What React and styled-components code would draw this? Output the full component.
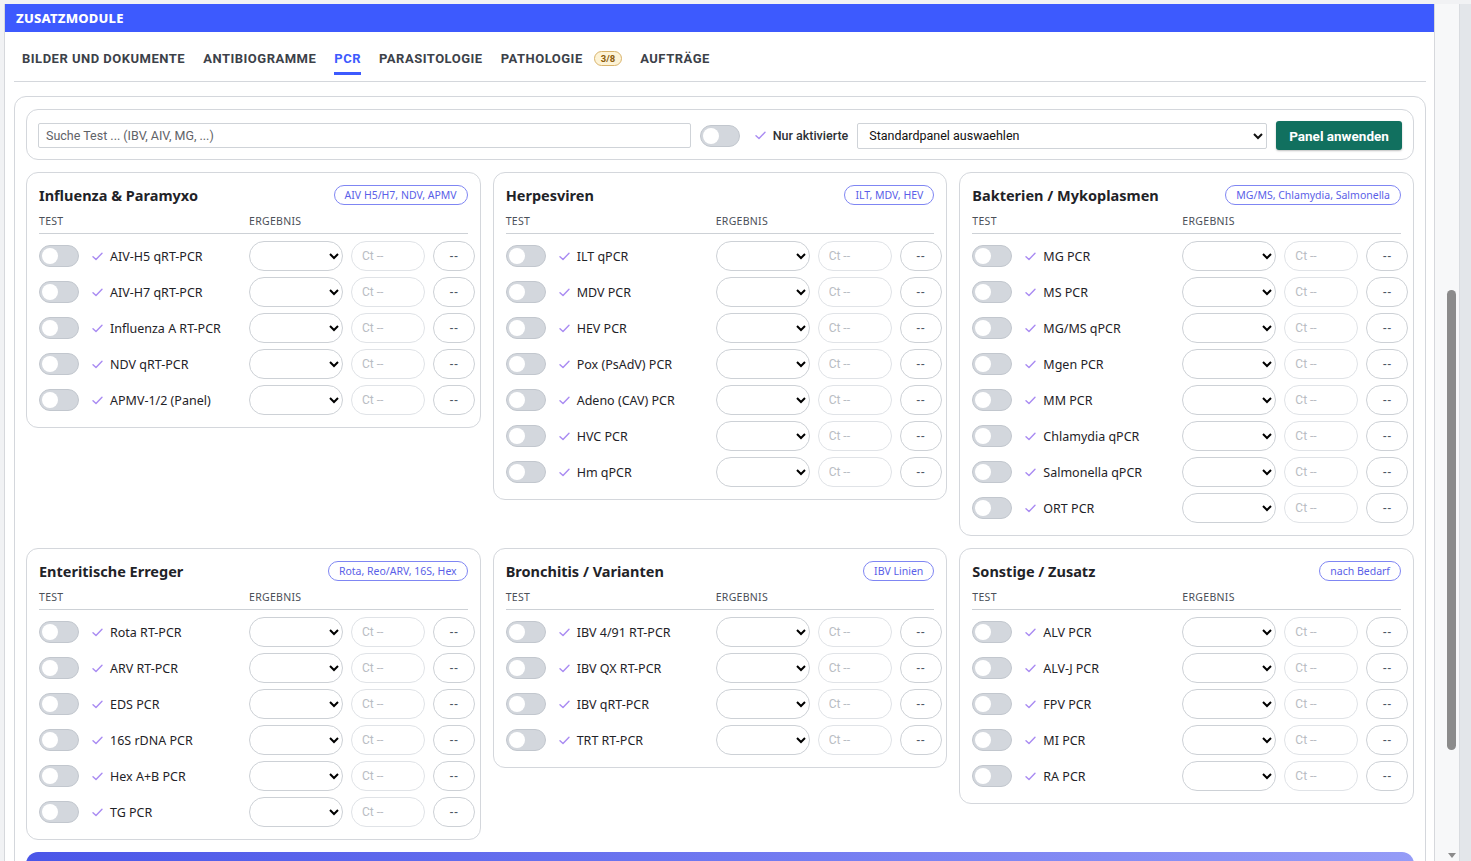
import React from 'react';
import styled, { createGlobalStyle } from 'styled-components';

const GlobalStyle = createGlobalStyle`
    html, body {
        margin: 0;
        padding: 0;
        background: #f1f2f4;
        overflow: hidden;
    }
    * { box-sizing: border-box; }
`;

const Shell = styled.div`
    display: flex;
    height: 861px;
    padding-top: 4px;
    padding-left: 4px;
    font-family: "Noto Sans", sans-serif;
`;

const Main = styled.div`
    flex: 1;
    min-width: 0;
    background: #fff;
    border-left: 1px solid #d6d8dc;
    border-right: 1px solid #d6d8dc;
    overflow: hidden;
`;

const Gutter = styled.div`
    width: 25px;
    background: #f7f8f9;
    display: flex;
    justify-content: flex-end;
    padding-top: 286px;
    border-right: 1px solid #d9dce0;
    position: relative;
`;

const Thumb = styled.div`
    width: 9px;
    height: 460px;
    margin-right: 3px;
    border-radius: 5px;
    background: #8b8b8b;
`;

const DownArrow = styled.div`
    position: absolute;
    bottom: 3px;
    right: 3px;
    width: 0;
    height: 0;
    border-left: 4px solid transparent;
    border-right: 4px solid transparent;
    border-top: 5px solid #8b8b8b;
`;

const Edge = styled.div`
    width: 11px;
    background: #e3e6ea;
`;

const ModuleHeader = styled.div`
    height: 28px;
    background: #3d5afe;
    color: #fff;
    font-family: "Noto Sans", sans-serif;
    font-weight: 800;
    font-size: 13px;
    letter-spacing: 0.2px;
    display: flex;
    align-items: center;
    padding-left: 11px;
`;

const Content = styled.div`
    padding: 0 8px 0 9px;
`;

const Tabs = styled.div`
    display: flex;
    align-items: flex-start;
    gap: 18px;
    padding: 0 8px;
    height: 50px;
    border-bottom: 1px solid #d4d7dc;
`;

const Tab = styled.div`
    display: flex;
    align-items: center;
    gap: 11px;
    height: 43px;
    padding-top: 12px;
    font-family: Roboto, "Liberation Sans", sans-serif;
    font-weight: 700;
    font-size: 13px;
    letter-spacing: 0.5px;
    color: ${p => (p.$active ? '#3d5afe' : '#3c4149')};
    border-bottom: 3px solid ${p => (p.$active ? '#3d5afe' : 'transparent')};
`;

const CountBadge = styled.span`
    font-size: 9.5px;
    font-weight: 700;
    letter-spacing: 0;
    color: #8a5a08;
    background: #fdf3d6;
    border: 1px solid #d9b46c;
    border-radius: 9px;
    padding: 1px 6px;
`;

const Outer = styled.div`
    margin-top: 14px;
    border: 1px solid #d4d7dc;
    border-radius: 12px;
    padding: 12px 11px 0;
    display: flex;
    flex-direction: column;
    gap: 12px;
`;

const Toolbar = styled.div`
    border: 1px solid #d4d7dc;
    border-radius: 12px;
    padding: 11px 11px 9px;
    display: flex;
    align-items: center;
    gap: 9px;
    font-family: Roboto, "Liberation Sans", sans-serif;
`;

const Search = styled.input`
    width: 653px;
    height: 25px;
    border: 1px solid #cfd3d8;
    border-radius: 2px;
    padding: 0 7px;
    font-family: Roboto, "Liberation Sans", sans-serif;
    font-size: 12.5px;
    color: #333;
    &::placeholder { color: #5f6368; }
`;

const Toggle = styled.span`
    flex: none;
    display: inline-block;
    width: 40px;
    height: 22px;
    border-radius: 11px;
    background: #d3d7dd;
    border: 1px solid #c2c7ce;
    position: relative;
    &::after {
        content: '';
        position: absolute;
        left: 2px;
        top: 2px;
        width: 16px;
        height: 16px;
        border-radius: 50%;
        background: #fff;
    }
`;

const CheckMark = () => (
    <svg width="11" height="9" viewBox="0 0 11 9" style={{ flex: 'none' }}>
        <path d="M1 4.8 L4 7.6 L10 1.2" fill="none" stroke="#a98bf2" strokeWidth="1.4" strokeLinecap="round" strokeLinejoin="round" />
    </svg>
);

const OnlyActive = styled.label`
    display: flex;
    align-items: center;
    gap: 7px;
    font-size: 12.5px;
    font-weight: 500;
    color: #2d3136;
    white-space: nowrap;
    & > svg { margin-left: 8px; }
`;

const PanelSelect = styled.select`
    width: 410px;
    height: 26px;
    border: 1px solid #cfd3d8;
    border-radius: 2px;
    padding: 0 7px;
    font-family: Roboto, "Liberation Sans", sans-serif;
    font-size: 12.5px;
    color: #111;
    background: #fff;
`;

const ApplyButton = styled.button`
    height: 29px;
    width: 126px;
    border: none;
    border-radius: 3px;
    background: #11705f;
    color: #fff;
    font-family: Roboto, "Liberation Sans", sans-serif;
    font-weight: 700;
    font-size: 13.5px;
    box-shadow: 0 1px 2px rgba(0, 0, 0, 0.25);
`;

const Grid = styled.div`
    display: grid;
    grid-template-columns: repeat(3, minmax(0, 1fr));
    gap: 12px 12px;
    align-items: start;
`;

const Card = styled.div`
    border: 1px solid #d4d7dc;
    border-radius: 12px;
    padding: 10px 12px 6px;
    min-width: 0;
`;

const CardHead = styled.div`
    display: flex;
    align-items: center;
    justify-content: space-between;
    height: 23px;
`;

const CardTitle = styled.h3`
    margin: 0;
    font-size: 14.5px;
    font-weight: 700;
    color: #1f2328;
`;

const Pill = styled.span`
    font-size: 10.5px;
    color: #5b5fe8;
    border: 1px solid #7f86f3;
    border-radius: 10px;
    padding: 2px 10px;
    line-height: 14px;
`;

const ColHead = styled.div`
    display: grid;
    grid-template-columns: 210px 1fr;
    font-size: 10.5px;
    color: #4b5058;
    letter-spacing: 0.3px;
    padding: 8px 0 5px;
    border-bottom: 1px solid #cdd1d6;
    margin-bottom: 7px;
`;

const Row = styled.div`
    display: grid;
    grid-template-columns: 202px 94px 74px 42px;
    column-gap: 8px;
    height: 36px;
    align-items: start;
`;

const TestCell = styled.div`
    display: flex;
    align-items: center;
    height: 30px;
    font-size: 12.5px;
    color: #1f2328;
    white-space: nowrap;
    & > svg { margin: 0 7px 0 13px; }
`;

const ResultSelect = styled.select`
    height: 30px;
    width: 94px;
    border: 1px solid #cdd1d6;
    border-radius: 15px;
    background: #fff;
    padding: 0 6px;
    font-size: 12px;
`;

const CtInput = styled.input`
    height: 30px;
    width: 74px;
    border: 1px solid #e0e3e7;
    border-radius: 15px;
    padding: 0 10px;
    font-family: Roboto, "Liberation Sans", sans-serif;
    font-size: 12px;
    &::placeholder { color: #b9bdc3; }
`;

const DashButton = styled.button`
    height: 30px;
    width: 42px;
    border: 1px solid #cdd1d6;
    border-radius: 15px;
    background: #fff;
    color: #4a5563;
    font-family: "Liberation Sans", sans-serif;
    font-size: 12px;
    letter-spacing: 0.5px;
    padding: 0;
`;

const BottomBar = styled.div`
    height: 30px;
    border-radius: 12px 12px 0 0;
    background: linear-gradient(90deg, #4a56e8 0%, #6f78f0 50%, #959cf7 100%);
`;

const panels = [
    {
        title: 'Influenza & Paramyxo',
        badge: 'AIV H5/H7, NDV, APMV',
        tests: ['AIV-H5 qRT-PCR', 'AIV-H7 qRT-PCR', 'Influenza A RT-PCR', 'NDV qRT-PCR', 'APMV-1/2 (Panel)'],
    },
    {
        title: 'Herpesviren',
        badge: 'ILT, MDV, HEV',
        tests: ['ILT qPCR', 'MDV PCR', 'HEV PCR', 'Pox (PsAdV) PCR', 'Adeno (CAV) PCR', 'HVC PCR', 'Hm qPCR'],
    },
    {
        title: 'Bakterien / Mykoplasmen',
        badge: 'MG/MS, Chlamydia, Salmonella',
        tests: ['MG PCR', 'MS PCR', 'MG/MS qPCR', 'Mgen PCR', 'MM PCR', 'Chlamydia qPCR', 'Salmonella qPCR', 'ORT PCR'],
    },
    {
        title: 'Enteritische Erreger',
        badge: 'Rota, Reo/ARV, 16S, Hex',
        tests: ['Rota RT-PCR', 'ARV RT-PCR', 'EDS PCR', '16S rDNA PCR', 'Hex A+B PCR', 'TG PCR'],
    },
    {
        title: 'Bronchitis / Varianten',
        badge: 'IBV Linien',
        tests: ['IBV 4/91 RT-PCR', 'IBV QX RT-PCR', 'IBV qRT-PCR', 'TRT RT-PCR'],
    },
    {
        title: 'Sonstige / Zusatz',
        badge: 'nach Bedarf',
        tests: ['ALV PCR', 'ALV-J PCR', 'FPV PCR', 'MI PCR', 'RA PCR'],
    },
];

const tabs = ['BILDER UND DOKUMENTE', 'ANTIBIOGRAMME', 'PCR', 'PARASITOLOGIE', 'PATHOLOGIE', 'AUFTRÄGE'];

const TestRow = ({ name }) => (
    <Row>
        <TestCell>
            <Toggle />
            <CheckMark />
            {name}
        </TestCell>
        <ResultSelect defaultValue="">
            <option value="" />
            <option>positiv</option>
            <option>negativ</option>
        </ResultSelect>
        <CtInput placeholder="Ct --" />
        <DashButton>--</DashButton>
    </Row>
);

const PanelCard = ({ panel }) => (
    <Card>
        <CardHead>
            <CardTitle>{panel.title}</CardTitle>
            <Pill>{panel.badge}</Pill>
        </CardHead>
        <ColHead>
            <span>TEST</span>
            <span>ERGEBNIS</span>
        </ColHead>
        {panel.tests.map(t => <TestRow key={t} name={t} />)}
    </Card>
);

const App = () => (
    <>
        <GlobalStyle />
        <Shell>
            <Main>
                <ModuleHeader>ZUSATZMODULE</ModuleHeader>
                <Content>
                    <Tabs>
                        {tabs.map(t => (
                            <Tab key={t} $active={t === 'PCR'}>
                                {t}
                                {t === 'PATHOLOGIE' && <CountBadge>3/8</CountBadge>}
                            </Tab>
                        ))}
                    </Tabs>
                    <Outer>
                        <Toolbar>
                            <Search placeholder="Suche Test ... (IBV, AIV, MG, ...)" />
                            <OnlyActive>
                                <Toggle />
                                <CheckMark />
                                Nur aktivierte
                            </OnlyActive>
                            <PanelSelect defaultValue="std">
                                <option value="std">Standardpanel auswaehlen</option>
                            </PanelSelect>
                            <ApplyButton>Panel anwenden</ApplyButton>
                        </Toolbar>
                        <Grid>
                            {panels.map(p => <PanelCard key={p.title} panel={p} />)}
                        </Grid>
                        <BottomBar />
                    </Outer>
                </Content>
            </Main>
            <Gutter>
                <Thumb />
                <DownArrow />
            </Gutter>
            <Edge />
        </Shell>
    </>
);

export default App;
